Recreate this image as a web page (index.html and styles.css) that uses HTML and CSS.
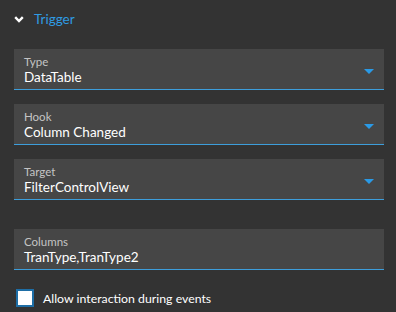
FILE: index.html
```html
<!DOCTYPE html>
<html lang="en">
<head>
  <meta charset="UTF-8" />
  <title>Trigger</title>
  <link rel="stylesheet" href="styles.css">
</head>
<body>

  <div class="panel">
    <!-- Section header -->
    <div class="section-header">
      <svg class="chevron" width="10" height="7" viewBox="0 0 10 7">
        <path d="M1.2 1.2 L5 5 L8.8 1.2" fill="none" stroke="#ffffff" stroke-width="2.4" />
      </svg>
      <span class="section-title">Trigger</span>
    </div>

    <div class="fields">
      <!-- Type -->
      <div class="field">
        <span class="field-label">Type</span>
        <span class="field-value">DataTable</span>
        <span class="dropdown-arrow"></span>
      </div>

      <!-- Hook -->
      <div class="field">
        <span class="field-label">Hook</span>
        <span class="field-value">Column Changed</span>
        <span class="dropdown-arrow"></span>
      </div>

      <!-- Target -->
      <div class="field">
        <span class="field-label">Target</span>
        <span class="field-value">FilterControlView</span>
        <span class="dropdown-arrow"></span>
      </div>

      <!-- Columns -->
      <div class="field field-text">
        <span class="field-label">Columns</span>
        <span class="field-value">TranType,TranType2</span>
      </div>
    </div>

    <label class="checkbox-row">
      <span class="checkbox"></span>
      <span class="checkbox-text">Allow interaction during events</span>
    </label>
  </div>

</body>
</html>
```

FILE: styles.css
```css
body {
  margin: 0;
  background-color: #333333;
  font-family: Lato, "Liberation Sans", sans-serif;
  color: #ffffff;
}

.panel {
  width: 396px;
  height: 312px;
  box-sizing: border-box;
}

/* Header row with chevron and title */
.section-header {
  display: flex;
  align-items: center;
  height: 36px;
  padding-left: 14px;
  padding-top: 1px;
  margin-bottom: 12px;
}

.chevron {
  margin-right: 10px;
}

.section-title {
  color: #2f9be3;
  font-size: 13.5px;
}

.fields {
  display: flex;
  flex-direction: column;
  gap: 14px;
  padding: 0 12px 0 14px;
}

/* Each select / input block */
.field {
  position: relative;
  display: flex;
  flex-direction: column;
  height: 41px;
  padding: 5px 10px 0 10px;
  box-sizing: border-box;
  background-color: #464646;
  border-bottom: 1px solid #3d9edb;
}

.field-text {
  margin-top: 15px;
}

.field-label {
  font-size: 11.5px;
  color: #c4c4c4;
  line-height: 15px;
}

.field-value {
  font-size: 13.5px;
  color: #ffffff;
  line-height: 17px;
}

/* Blue triangle on the right */
.dropdown-arrow {
  position: absolute;
  right: 10px;
  top: 20px;
  width: 0;
  height: 0;
  border-left: 5px solid transparent;
  border-right: 5px solid transparent;
  border-top: 5px solid #2a9ae6;
}

.checkbox-row {
  display: flex;
  align-items: center;
  margin: 19px 0 0 16px;
}

.checkbox {
  width: 14px;
  height: 14px;
  background-color: #ffffff;
  border: 2px solid #1e6ea6;
  margin-right: 9px;
}

.checkbox-text {
  font-size: 12.3px;
  color: #ffffff;
}
```
